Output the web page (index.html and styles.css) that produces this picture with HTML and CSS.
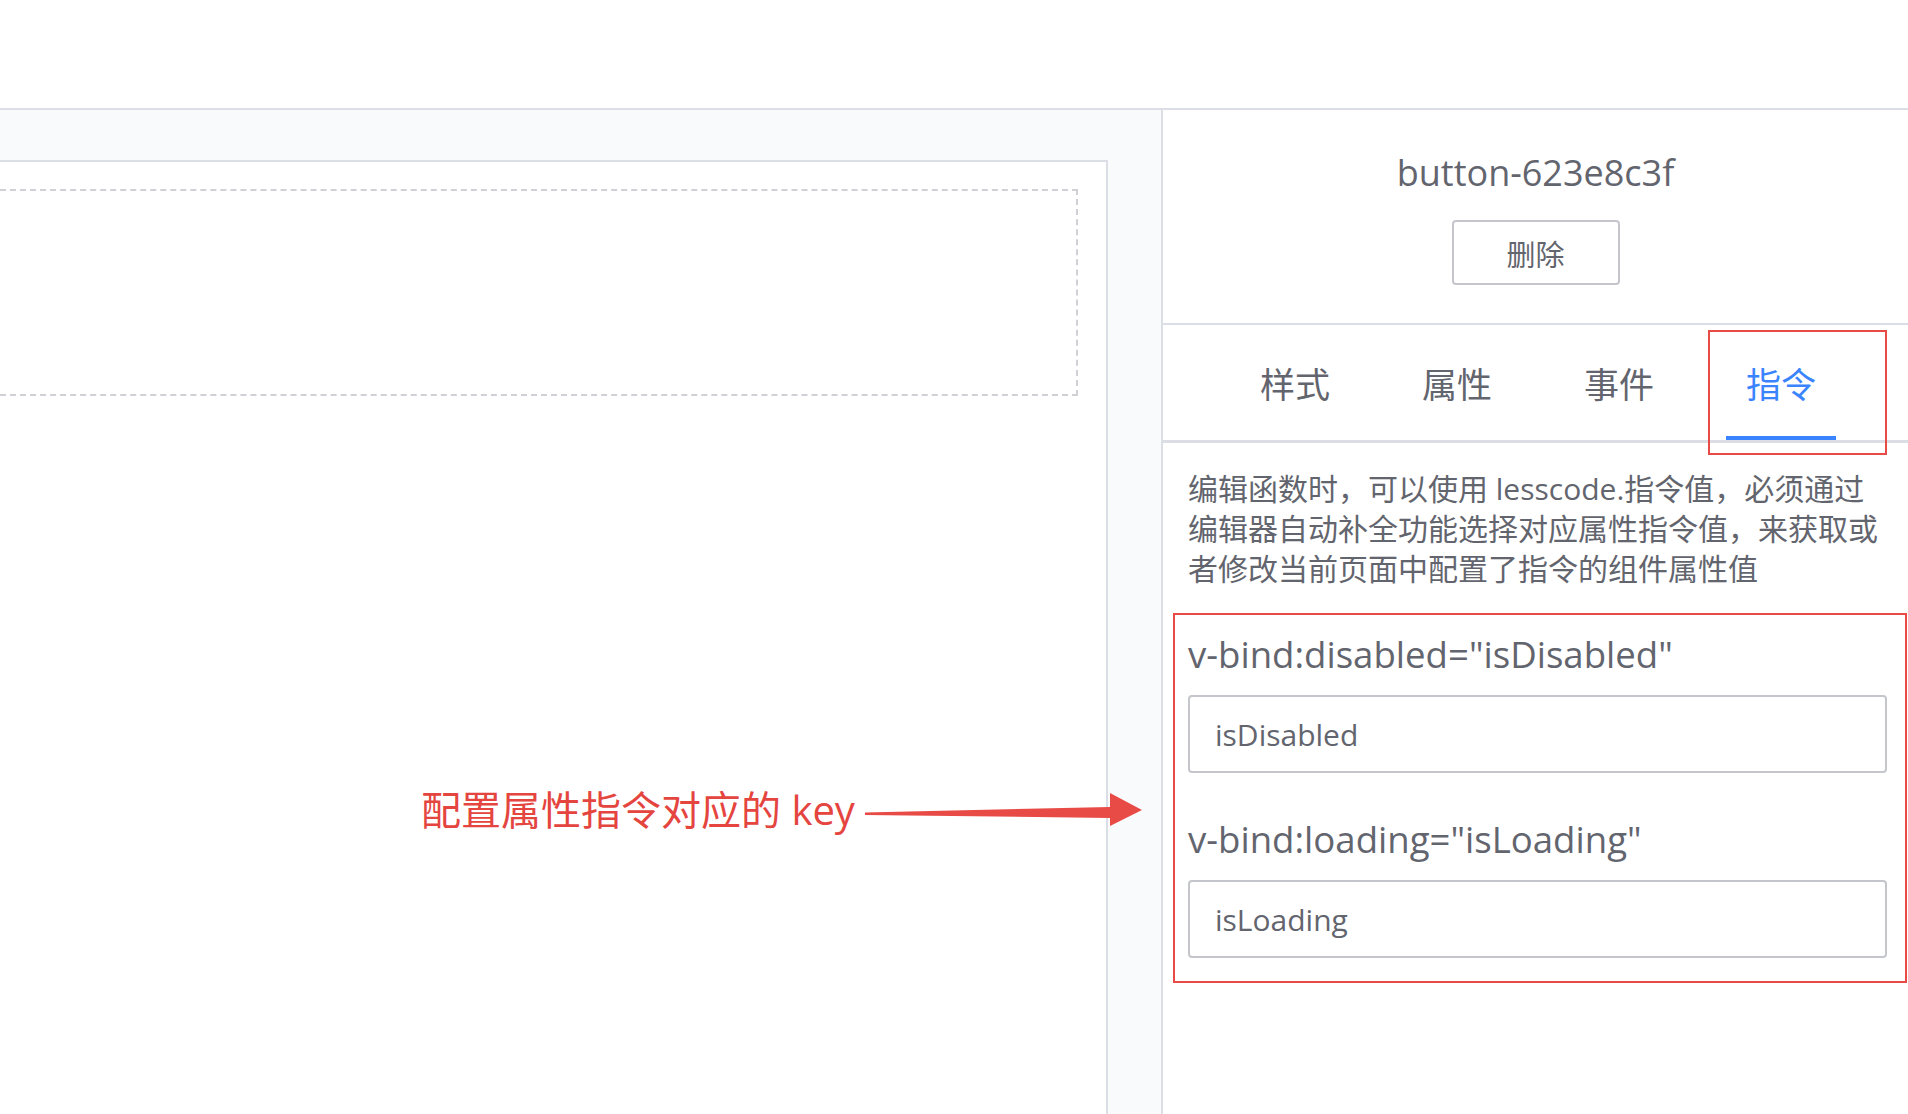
FILE: index.html
```html
<!DOCTYPE html>
<html lang="zh-CN">
<head>
<meta charset="utf-8">
<title>lesscode 指令</title>
<link rel="stylesheet" href="styles.css">
</head>
<body>
<div class="page">
  <header class="topbar"></header>
  <div class="main">
    <section class="workspace">
      <div class="canvas">
        <div class="drop-zone"></div>
      </div>
    </section>
    <aside class="panel">
      <div class="panel-head">
        <div class="comp-name">button-623e8c3f</div>
        <button class="btn-delete">删除</button>
      </div>
      <nav class="tabs">
        <div class="tab">样式</div>
        <div class="tab">属性</div>
        <div class="tab">事件</div>
        <div class="tab active">指令</div>
      </nav>
      <p class="desc">编辑函数时，可以使用 lesscode.指令值，必须通过编辑器自动补全功能选择对应属性指令值，来获取或者修改当前页面中配置了指令的组件属性值</p>
      <div class="form">
        <div class="form-item">
          <label>v-bind:disabled="isDisabled"</label>
          <input class="input" type="text" value="isDisabled" readonly>
        </div>
        <div class="form-item">
          <label>v-bind:loading="isLoading"</label>
          <input class="input" type="text" value="isLoading" readonly>
        </div>
      </div>
    </aside>
  </div>

  <div class="note-text">配置属性指令对应的 key</div>
  <svg class="note-arrow" viewBox="860 785 290 50" width="290" height="50">
    <polygon points="865,812.5 1110,807 1110,793 1142,810 1110,826 1110,818 865,815" fill="#e84a45"/>
  </svg>
  <div class="mark mark-tab"></div>
  <div class="mark mark-form"></div>
</div>
</body>
</html>
```

FILE: styles.css
```css
html, body {
  margin: 0;
  padding: 0;
}

body {
  font-family: "Open Sans", "Noto Sans CJK SC", sans-serif;
  color: #63656e;
  background: #fff;
}

.page {
  position: relative;
  width: 1908px;
  height: 1114px;
  overflow: hidden;
  display: flex;
  flex-direction: column;
}

.topbar {
  flex: none;
  height: 108px;
  border-bottom: 2px solid #dcdee5;
  background: #fff;
}

.main {
  flex: 1;
  min-height: 0;
  display: flex;
}

.workspace {
  width: 1161px;
  flex: none;
  box-sizing: border-box;
  padding: 50px 53px 0 0;
  background: #f9fafc;
  display: flex;
}

.canvas {
  flex: 1;
  background: #fff;
  border-top: 2px solid #dcdee5;
  border-right: 2px solid #dcdee5;
  padding-top: 27px;
}

.drop-zone {
  width: 1078px;
  height: 207px;
  box-sizing: border-box;
  border: 2px dashed #cfd1d6;
  border-left: none;
}

.panel {
  width: 747px;
  flex: none;
  box-sizing: border-box;
  border-left: 2px solid #dcdee5;
  background: #fff;
}

.panel-head {
  display: flex;
  flex-direction: column;
  align-items: center;
  padding: 39px 0 38px;
  border-bottom: 2px solid #dcdee5;
}

.comp-name {
  font-size: 36px;
  line-height: 48px;
  color: #63656e;
}

.btn-delete {
  margin-top: 23px;
  width: 168px;
  height: 65px;
  box-sizing: border-box;
  border: 2px solid #c4c6cc;
  border-radius: 4px;
  background: #fff;
  color: #63656e;
  font-family: "Noto Sans CJK SC", sans-serif;
  font-size: 29px;
  padding: 0;
}

.tabs {
  display: flex;
  height: 115px;
  padding-left: 51px;
  border-bottom: 3px solid #dcdee5;
}

.tab {
  position: relative;
  width: 162px;
  display: flex;
  align-items: center;
  justify-content: center;
  font-family: "Noto Sans CJK SC", sans-serif;
  font-size: 35px;
  color: #63656e;
}

.tab.active {
  color: #3a84ff;
}

.tab.active::after {
  content: "";
  position: absolute;
  left: 26px;
  bottom: 0;
  width: 110px;
  height: 4px;
  background: #3a84ff;
}

.desc {
  margin: 0;
  padding: 26px 20px 0 25px;
  font-size: 30px;
  line-height: 40px;
}

.form {
  padding: 41px 21px 0 25px;
}

.form-item + .form-item {
  margin-top: 42px;
}

.form-item label {
  display: block;
  font-size: 36.6px;
  line-height: 48px;
}

.input {
  display: block;
  width: 100%;
  height: 78px;
  margin-top: 17px;
  box-sizing: border-box;
  border: 2px solid #c4c6cc;
  border-radius: 4px;
  padding: 0 25px;
  font-family: "Open Sans", "Noto Sans CJK SC", sans-serif;
  font-size: 30px;
  color: #63656e;
  background: #fff;
  outline: none;
}

.note-text {
  position: absolute;
  left: 421px;
  top: 783px;
  font-size: 40px;
  line-height: 54px;
  color: #e5453f;
  white-space: nowrap;
}

.note-arrow {
  position: absolute;
  left: 860px;
  top: 785px;
}

.mark {
  position: absolute;
  box-sizing: border-box;
  border: 2px solid #e84a45;
}

.mark-tab {
  left: 1708px;
  top: 330px;
  width: 179px;
  height: 125px;
}

.mark-form {
  left: 1173px;
  top: 613px;
  width: 734px;
  height: 370px;
}
```
